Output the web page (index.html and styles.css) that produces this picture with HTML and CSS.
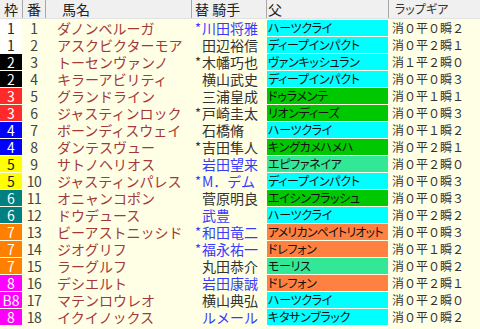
FILE: index.html
```html
<!DOCTYPE html>
<html lang="ja">
<head>
<meta charset="utf-8">
<link rel="stylesheet" href="styles.css">
</head>
<body>
<div class="table">
  <div class="head">
    <div class="h h-waku">枠</div>
    <div class="h h-num">番</div>
    <div class="h h-name">馬名</div>
    <div class="h h-jockey">替 騎手</div>
    <div class="h h-sire">父</div>
    <div class="h h-gear">ラップギア</div>
  </div>
  <div class="rows">
    <div class="row"><div class="waku w1">1</div><div class="num">1</div><div class="name">ダノンベルーガ</div><div class="jockey blue"><span class="mark">*</span>川田将雅</div><div class="sire cyan">ハーツクライ</div><div class="gear">消０平０瞬２</div></div>
    <div class="row"><div class="waku w1">1</div><div class="num">2</div><div class="name">アスクビクターモア</div><div class="jockey"><span class="mark"></span>田辺裕信</div><div class="sire cyan">ディープインパクト</div><div class="gear">消０平２瞬１</div></div>
    <div class="row"><div class="waku w2">2</div><div class="num">3</div><div class="name">トーセンヴァンノ</div><div class="jockey"><span class="mark">*</span>木幡巧也</div><div class="sire cyan">ヴァンキッシュラン</div><div class="gear">消１平２瞬０</div></div>
    <div class="row"><div class="waku w2">2</div><div class="num">4</div><div class="name">キラーアビリティ</div><div class="jockey"><span class="mark"></span>横山武史</div><div class="sire cyan">ディープインパクト</div><div class="gear">消０平０瞬３</div></div>
    <div class="row"><div class="waku w3">3</div><div class="num">5</div><div class="name">グランドライン</div><div class="jockey"><span class="mark"></span>三浦皇成</div><div class="sire green">ドゥラメンテ</div><div class="gear">消０平１瞬１</div></div>
    <div class="row"><div class="waku w3">3</div><div class="num">6</div><div class="name">ジャスティンロック</div><div class="jockey"><span class="mark">*</span>戸崎圭太</div><div class="sire green">リオンディーズ</div><div class="gear">消０平０瞬３</div></div>
    <div class="row"><div class="waku w4">4</div><div class="num">7</div><div class="name">ボーンディスウェイ</div><div class="jockey"><span class="mark"></span>石橋脩</div><div class="sire cyan">ハーツクライ</div><div class="gear">消０平１瞬２</div></div>
    <div class="row"><div class="waku w4">4</div><div class="num">8</div><div class="name">ダンテスヴュー</div><div class="jockey"><span class="mark">*</span>吉田隼人</div><div class="sire green">キングカメハメハ</div><div class="gear">消０平２瞬１</div></div>
    <div class="row"><div class="waku w5">5</div><div class="num">9</div><div class="name">サトノヘリオス</div><div class="jockey blue"><span class="mark"></span>岩田望来</div><div class="sire spring">エピファネイア</div><div class="gear">消０平２瞬０</div></div>
    <div class="row"><div class="waku w5">5</div><div class="num">10</div><div class="name">ジャスティンパレス</div><div class="jockey blue"><span class="mark">*</span>M．デム</div><div class="sire cyan">ディープインパクト</div><div class="gear">消０平０瞬３</div></div>
    <div class="row"><div class="waku w6">6</div><div class="num">11</div><div class="name">オニャンコポン</div><div class="jockey"><span class="mark"></span>菅原明良</div><div class="sire green">エイシンフラッシュ</div><div class="gear">消０平０瞬３</div></div>
    <div class="row"><div class="waku w6">6</div><div class="num">12</div><div class="name">ドウデュース</div><div class="jockey blue"><span class="mark"></span>武豊</div><div class="sire cyan">ハーツクライ</div><div class="gear">消０平２瞬２</div></div>
    <div class="row"><div class="waku w7">7</div><div class="num">13</div><div class="name">ビーアストニッシド</div><div class="jockey blue"><span class="mark">*</span>和田竜二</div><div class="sire orange tight">アメリカンペイトリオット</div><div class="gear">消０平０瞬３</div></div>
    <div class="row"><div class="waku w7">7</div><div class="num">14</div><div class="name">ジオグリフ</div><div class="jockey blue"><span class="mark">*</span>福永祐一</div><div class="sire orange">ドレフォン</div><div class="gear">消０平１瞬２</div></div>
    <div class="row"><div class="waku w7">7</div><div class="num">15</div><div class="name">ラーグルフ</div><div class="jockey"><span class="mark"></span>丸田恭介</div><div class="sire spring">モーリス</div><div class="gear">消０平０瞬２</div></div>
    <div class="row"><div class="waku w8">8</div><div class="num">16</div><div class="name">デシエルト</div><div class="jockey blue"><span class="mark"></span>岩田康誠</div><div class="sire orange">ドレフォン</div><div class="gear">消０平２瞬１</div></div>
    <div class="row"><div class="waku w8">B8</div><div class="num">17</div><div class="name">マテンロウレオ</div><div class="jockey"><span class="mark"></span>横山典弘</div><div class="sire cyan">ハーツクライ</div><div class="gear">消０平２瞬０</div></div>
    <div class="row"><div class="waku w8">8</div><div class="num">18</div><div class="name">イクイノックス</div><div class="jockey blue"><span class="mark"></span>ルメール</div><div class="sire cyan">キタサンブラック</div><div class="gear">消０平０瞬２</div></div>
  </div>
</div>
</body>
</html>
```

FILE: styles.css
```css
html, body {
  margin: 0;
  padding: 0;
  background: #ffffe6;
}

body {
  width: 480px;
  height: 329px;
  overflow: hidden;
  font-family: "Noto Sans CJK JP", "Noto Sans", sans-serif;
  color: #333;
}

.table {
  display: flex;
  flex-direction: column;
}

.head,
.row {
  display: grid;
  grid-template-columns: 22px 22px 145px 74px 121px 91px;
  column-gap: 1px;
}

.head {
  height: 18px;
  background: #a8a8a8;
  border-bottom: 1px solid #e2e2e2;
}

.h {
  background: #f0f0f0;
  font-size: 14px;
  line-height: 18px;
  color: #222;
  white-space: nowrap;
}

.h-waku, .h-num { text-align: center; }
.h-name { padding-left: 16px; }
.h-jockey { padding-left: 3px; }
.h-sire { padding-left: 1px; }
.h-gear {
  padding-left: 6px;
  font-size: 12px;
  font-feature-settings: "palt";
  color: #333;
}

.rows {
  display: flex;
  flex-direction: column;
  row-gap: 1px;
  padding-top: 1px;
}

.row {
  height: 16px;
  line-height: 16px;
}

.row > div {
  white-space: nowrap;
}

.waku {
  text-align: center;
  font-size: 14px;
  color: #fff;
}

.w1 { background: #ffffff; color: #222; }
.w2 { background: #000000; }
.w3 { background: #ff2a2a; }
.w4 { background: #0000ff; }
.w5 { background: #ffff00; color: #222; }
.w6 { background: #008080; }
.w7 { background: #ff8000; }
.w8 { background: #ff00ff; }

.num {
  text-align: center;
  font-size: 14px;
  color: #444;
  letter-spacing: -0.5px;
}

.name {
  padding-left: 11px;
  font-size: 14px;
  color: #a33838;
}

.jockey {
  display: flex;
  padding-left: 3px;
  font-size: 14px;
  color: #333;
}

.jockey.blue { color: #3a3aff; }

.mark {
  flex: 0 0 7px;
  width: 7px;
  font-size: 13px;
}

.sire {
  padding-left: 1px;
  font-size: 12px;
  font-feature-settings: "palt";
  letter-spacing: -0.3px;
  color: #111;
}

.sire.tight { letter-spacing: -0.8px; }

.cyan { background: #00ffff; }
.green { background: #00c800; }
.spring { background: #32e896; }
.orange { background: #ff8040; }

.gear {
  padding-left: 3px;
  font-size: 12px;
  color: #333;
}
```
